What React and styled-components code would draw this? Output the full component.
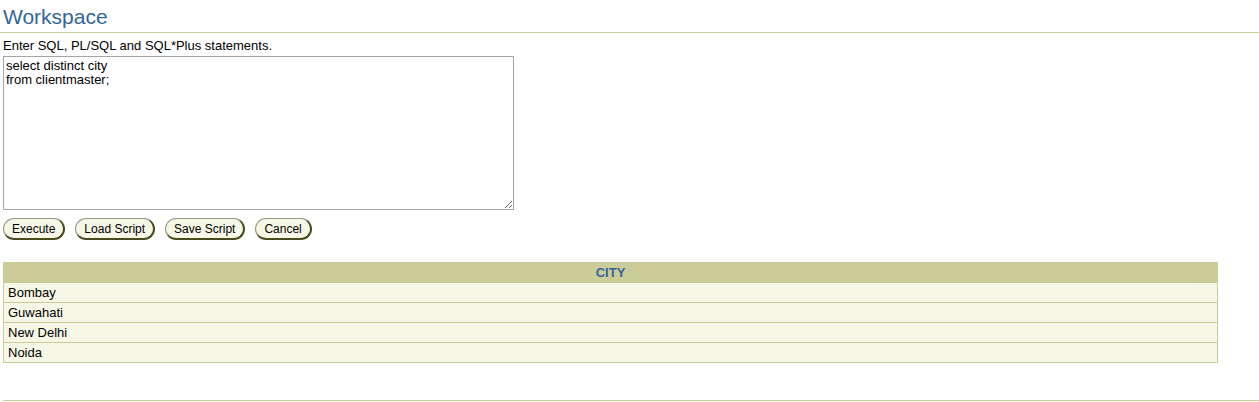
import styled, { createGlobalStyle } from 'styled-components';

const GlobalStyle = createGlobalStyle`
  html, body {
    margin: 0;
    padding: 0;
    background: #ffffff;
    font-family: "Liberation Sans", Arial, sans-serif;
  }
`;

const Page = styled.div`
  width: 1259px;
  height: 402px;
  overflow: hidden;
  display: flex;
  flex-direction: column;
`;

const Title = styled.h1`
  margin: 0;
  padding: 6px 3px 4px 3px;
  font-size: 21px;
  font-weight: normal;
  line-height: 22px;
  color: #336699;
  border-bottom: 1px solid #cccc99;
`;

const Intro = styled.div`
  padding: 5px 3px 0 3px;
  font-size: 13px;
  line-height: 15px;
  color: #000;
`;

const Editor = styled.textarea`
  margin: 3px 0 0 3px;
  width: 511px;
  height: 154px;
  box-sizing: border-box;
  border: 1px solid #a5a5a5;
  padding: 2px 2px;
  font-family: "Liberation Sans", Arial, sans-serif;
  font-size: 13px;
  line-height: 14px;
  color: #000;
  resize: both;
  outline: none;
`;

const ButtonRow = styled.div`
  display: flex;
  gap: 10px;
  padding: 8px 3px 0 3px;
`;

const PillButton = styled.button`
  height: 22px;
  padding: 0 8px;
  border: 1px solid #999988;
  border-bottom: 2px solid #4a4a1f;
  border-right: 2px solid #4a4a1f;
  border-radius: 11px;
  background: #f7f7e7;
  font-family: "Liberation Sans", Arial, sans-serif;
  font-size: 12px;
  color: #000;
  cursor: pointer;
  line-height: 18px;
`;

const Table = styled.table`
  margin: 22px 0 0 3px;
  width: 1215px;
  border-collapse: collapse;
  font-size: 13px;
`;

const HeadCell = styled.th`
  background: #cccc99;
  color: #336699;
  font-weight: bold;
  height: 19px;
  padding: 0;
  text-align: center;
  border: 1px solid #cccc99;
`;

const Cell = styled.td`
  background: #f7f7e7;
  color: #000;
  height: 19px;
  padding: 0 4px;
  border: 1px solid #cccc99;
`;

const Footer = styled.div`
  margin: 37px 0 0 3px;
  border-top: 1px solid #cccc99;
`;

const cities = ['Bombay', 'Guwahati', 'New Delhi', 'Noida'];

export default function App() {
  return (
    <Page>
      <GlobalStyle />
      <Title>Workspace</Title>
      <Intro>Enter SQL, PL/SQL and SQL*Plus statements.</Intro>
      <Editor defaultValue={'select distinct city\nfrom clientmaster;'} spellCheck={false} />
      <ButtonRow>
        <PillButton>Execute</PillButton>
        <PillButton>Load Script</PillButton>
        <PillButton>Save Script</PillButton>
        <PillButton>Cancel</PillButton>
      </ButtonRow>
      <Table>
        <thead>
          <tr>
            <HeadCell>CITY</HeadCell>
          </tr>
        </thead>
        <tbody>
          {cities.map((c) => (
            <tr key={c}>
              <Cell>{c}</Cell>
            </tr>
          ))}
        </tbody>
      </Table>
      <Footer />
    </Page>
  );
}
